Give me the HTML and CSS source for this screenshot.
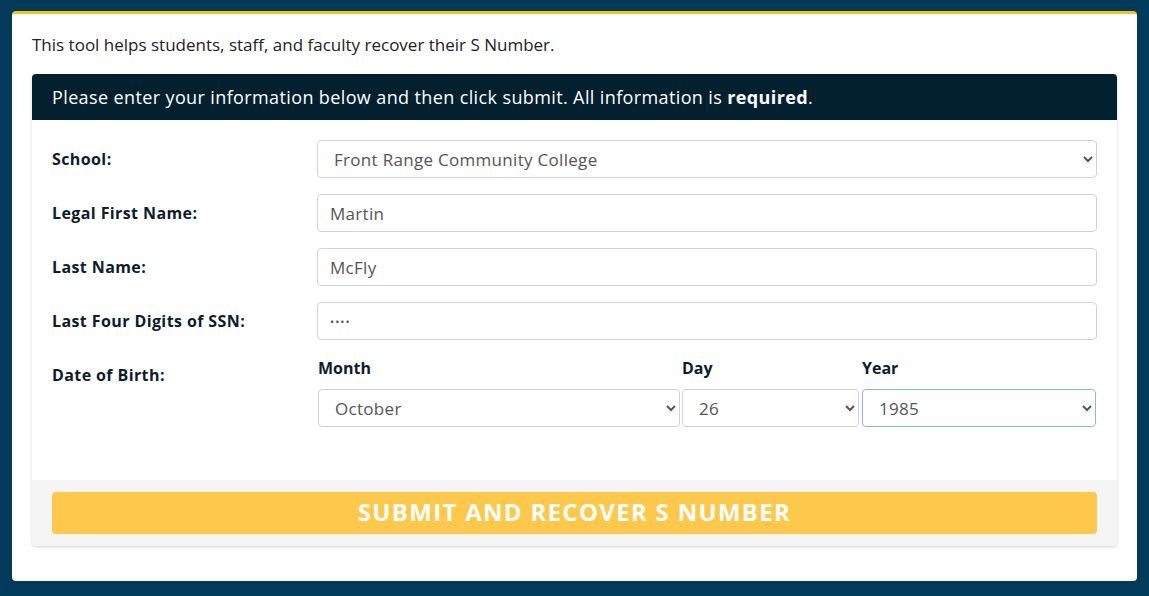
FILE: index.html
```html
<!DOCTYPE html>
<html lang="en">
<head>
<meta charset="utf-8">
<title>Recover S Number</title>
<link rel="stylesheet" href="styles.css">
</head>
<body>
<main class="card">
  <p class="intro">This tool helps students, staff, and faculty recover their S Number.</p>
  <form class="panel">
    <div class="panel-head">Please enter your information below and then click submit. All information is <strong>required</strong>.</div>
    <div class="panel-body">
      <div class="row">
        <label class="label" for="school">School:</label>
        <select id="school" class="control select">
          <option>Front Range Community College</option>
        </select>
      </div>
      <div class="row">
        <label class="label" for="first">Legal First Name:</label>
        <input id="first" class="control input" type="text" value="Martin">
      </div>
      <div class="row">
        <label class="label" for="last">Last Name:</label>
        <input id="last" class="control input" type="text" value="McFly">
      </div>
      <div class="row">
        <label class="label" for="ssn">Last Four Digits of SSN:</label>
        <input id="ssn" class="control input pw" type="password" value="1234">
      </div>
      <div class="row dob">
        <span class="label">Date of Birth:</span>
        <div class="dob-grid">
          <div class="dob-field">
            <label class="sub-label" for="month">Month</label>
            <select id="month" class="control select"><option>October</option></select>
          </div>
          <div class="dob-field">
            <label class="sub-label" for="day">Day</label>
            <select id="day" class="control select"><option>26</option></select>
          </div>
          <div class="dob-field">
            <label class="sub-label" for="year">Year</label>
            <select id="year" class="control select focused"><option>1985</option></select>
          </div>
        </div>
      </div>
    </div>
    <div class="panel-foot">
      <button type="button" class="submit">Submit and Recover S Number</button>
    </div>
  </form>
</main>
</body>
</html>
```

FILE: styles.css
```css
html, body {
  margin: 0;
  padding: 0;
}
body {
  background: #023a5b;
  font-family: "Open Sans", "DejaVu Sans", sans-serif;
  color: #212529;
  padding: 11px 12px 15px;
  height: 596px;
  box-sizing: border-box;
}
.card {
  background: #fff;
  border-top: 3px solid #f3c711;
  border-radius: 4px;
  padding: 19px 20px 35px;
  height: 570px;
  box-sizing: border-box;
}
.intro {
  margin: 0 0 17px;
  font-size: 17px;
  line-height: 24px;
  color: #222;
}
.panel {
  border-radius: 4px;
  box-shadow: 0 1px 3px rgba(0,0,0,0.18);
  overflow: hidden;
}
.panel-head {
  background: #03202f;
  color: #fff;
  font-size: 18px;
  letter-spacing: 0.38px;
  line-height: 24px;
  padding: 11px 20px;
}
.panel-head strong { font-weight: 700; }
.panel-body {
  background: #fff;
  padding: 20px 20px 53px;
  display: flex;
  flex-direction: column;
  gap: 16px;
}
.row {
  display: grid;
  grid-template-columns: 265px 1fr;
  align-items: start;
}
.label {
  font-size: 16px;
  letter-spacing: 0.4px;
  font-weight: 700;
  color: #0c1d2b;
  line-height: 38px;
}
.control {
  height: 38px;
  box-sizing: border-box;
  border: 1px solid #cfd3d7;
  border-radius: 4px;
  background: #fff;
  font-family: inherit;
  font-size: 17px;
  letter-spacing: 0.3px;
  color: #555;
  width: 100%;
  margin: 0;
}
.input { padding: 0 12px; }
.pw { font-size: 11px; letter-spacing: 1px; }
.select { padding: 0 8px 0 12px; }
.focused { border-color: #8db7e0; }
.dob-grid {
  display: grid;
  grid-template-columns: 362px 177px 1fr;
  column-gap: 2px;
  padding-left: 1px;
  margin-right: 1px;
}
.dob-field {
  display: flex;
  flex-direction: column;
  gap: 9px;
}
.dob-field:last-child { margin-left: 1px; }
.sub-label {
  font-size: 16px;
  font-weight: 700;
  color: #0c1d2b;
  line-height: 24px;
}
.panel-foot {
  background: #f5f5f5;
  padding: 12px 20px;
}
.submit {
  display: block;
  width: 100%;
  height: 42px;
  padding: 0 0 3px;
  border: 0;
  border-radius: 4px;
  background: #fec94b;
  color: #fff;
  font-family: inherit;
  font-size: 24px;
  font-weight: 700;
  text-transform: uppercase;
  letter-spacing: 1.3px;
}
```
